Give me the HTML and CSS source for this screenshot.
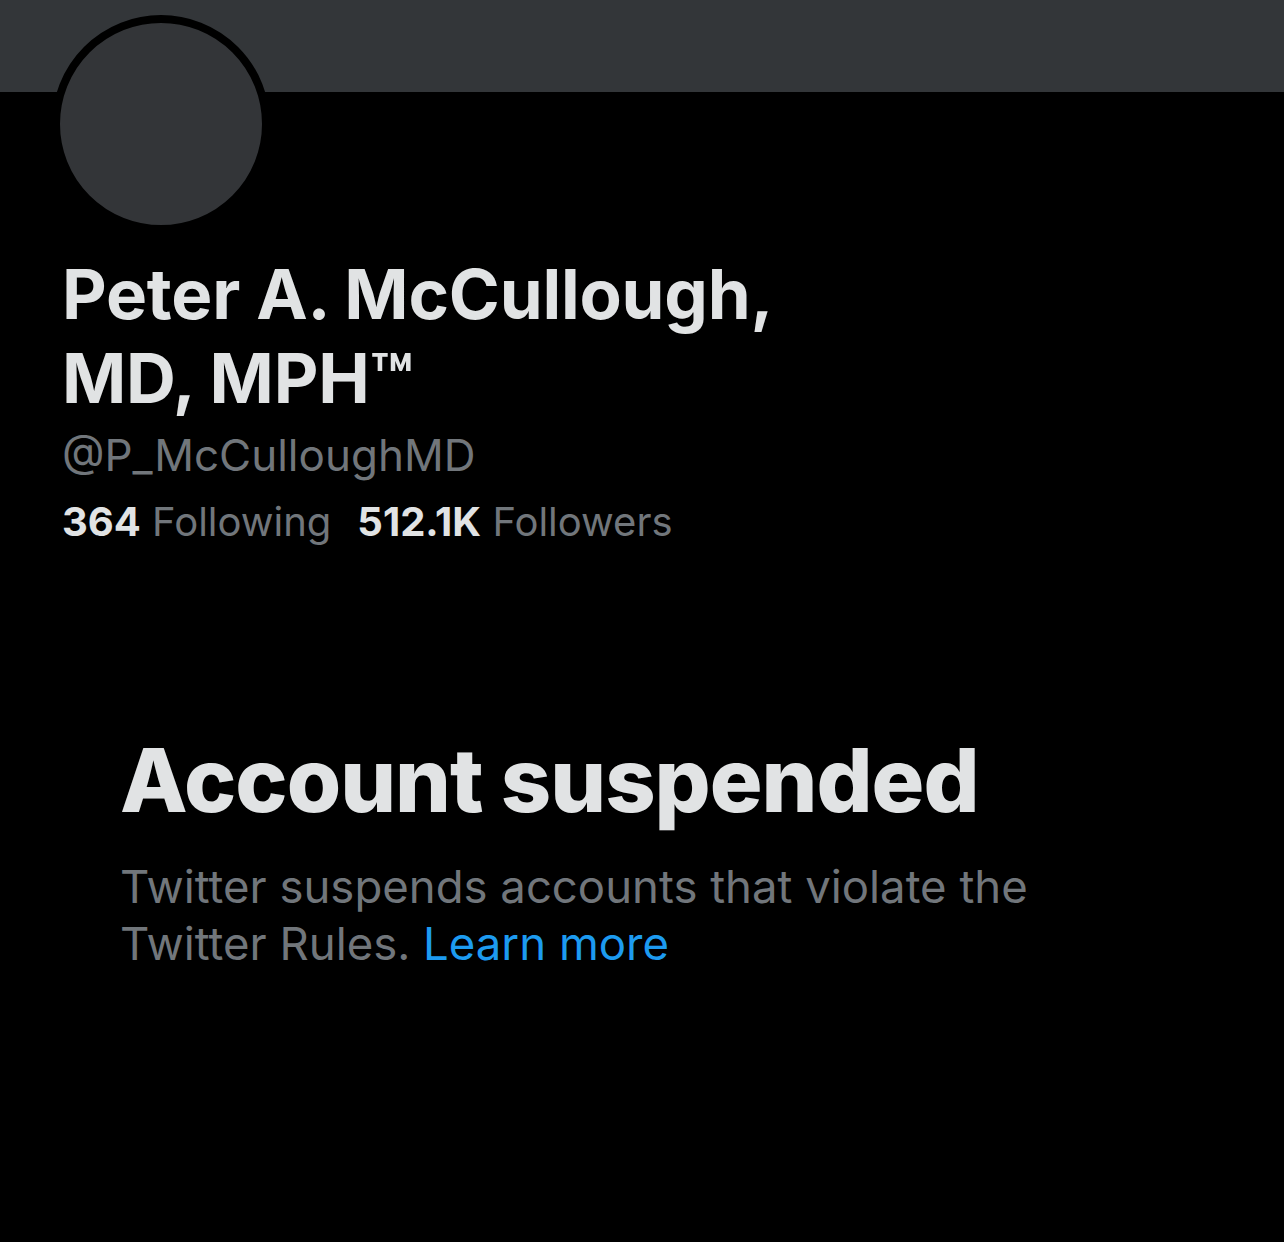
FILE: index.html
```html
<!DOCTYPE html>
<html lang="en">
<head>
    <meta charset="UTF-8">
    <meta name="viewport" content="width=device-width, initial-scale=1.0">
    <title>Peter A. McCullough, MD, MPH™ (@P_McCulloughMD)</title>
    <link rel="stylesheet" href="styles.css">
</head>
<body>

<div class="banner"></div>

<div class="profile">
    <div class="avatar"></div>

    <h1 class="name">Peter A. McCullough,<br>MD, MPH™</h1>
    <div class="handle">@P_McCulloughMD</div>

    <div class="stats">
        <span><strong>364</strong> Following</span>
        <span><strong>512.1K</strong> Followers</span>
    </div>
</div>

<div class="suspended">
    <h2>Account suspended</h2>
    <p>Twitter suspends accounts that violate the Twitter Rules. <a href="#">Learn more</a></p>
</div>

</body>
</html>
```

FILE: styles.css
```css
body {
    font-family: Inter, "Noto Sans", sans-serif;
    background-color: #000;
    color: #e1e3e4;
    margin: 0;
    min-height: 100vh;
}
.banner {
    height: 92px;
    background-color: #333639;
}
.profile {
    padding: 0 0 0 62px;
}
.avatar {
    width: 202px;
    height: 202px;
    border-radius: 50%;
    background-color: #333538;
    border: 8px solid #000;
    margin: -77px 0 0 -10px;
}
.name {
    margin: 19px 0 0;
    font-size: 69px;
    line-height: 84px;
    font-weight: 700;
    letter-spacing: -0.2px;
}
.handle {
    color: #71767b;
    font-size: 44px;
    line-height: 60px;
    margin-top: 5px;
}
.stats {
    display: flex;
    gap: 26px;
    margin-top: 7px;
    font-size: 40px;
    line-height: 60px;
    color: #71767b;
}
.stats strong {
    color: #e1e3e4;
    font-weight: 700;
}
.suspended {
    padding: 178px 0 0 120px;
}
.suspended h2 {
    margin: 0;
    font-size: 88px;
    font-weight: 800;
    line-height: 100px;
    letter-spacing: -1px;
}
.suspended p {
    margin: 28px 0 0;
    max-width: 960px;
    color: #71767b;
    font-size: 45.5px;
    line-height: 57px;
}
.suspended a {
    color: #1d9bf0;
    text-decoration: none;
}
```
